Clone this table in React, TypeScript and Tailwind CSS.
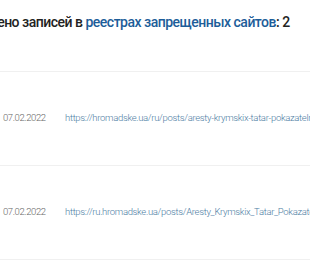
const rows = [
  { date: "07.02.2022", url: "https://hromadske.ua/ru/posts/aresty-krymskix-tatar-pokazatelnye-repressii" },
  { date: "07.02.2022", url: "https://ru.hromadske.ua/posts/Aresty_Krymskix_Tatar_Pokazatelnye_Repressii" },
];

export default function App() {
  return (
    <div className="w-[310px] h-[270px] overflow-hidden bg-white font-['Roboto',sans-serif]">
      <div className="-ml-[35px] w-[700px]">
        {/* Heading */}
        <div className="h-[71px] pt-[12px] text-[14px] font-medium tracking-[-0.5px] text-[#222]">
          Найдено записей в{" "}
          <span className="text-[#1d5d99]">реестрах запрещенных сайтов</span>: 2
        </div>

        {/* Table */}
        <div className="border-t border-[#f0f0f0]">
          {rows.map((r, i) => (
            <div
              key={i}
              className="flex items-center h-[94px] border-b border-[#f0f0f0] text-[9.5px] font-light"
            >
              <div className="w-[100px] pl-[38px] text-[#666] tracking-[-0.4px]">{r.date}</div>
              <div className="text-[#4d7da3] whitespace-nowrap tracking-[-0.32px]">{r.url}</div>
            </div>
          ))}
        </div>
      </div>
    </div>
  );
}
